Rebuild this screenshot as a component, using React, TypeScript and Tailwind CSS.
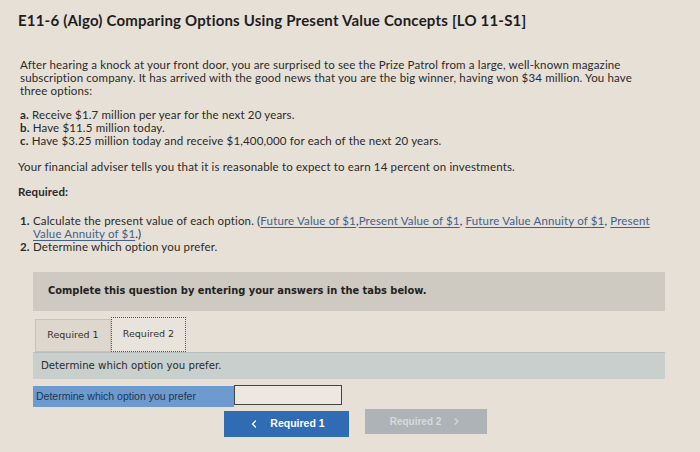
import { ChevronLeft, ChevronRight } from 'lucide-react'

const body = { fontFamily: 'Lato, "Open Sans", sans-serif' }
const verdana = { fontFamily: '"DejaVu Sans", Verdana, sans-serif' }
const arial = { fontFamily: '"Liberation Sans", Arial, sans-serif' }

function Link({ children }: { children: React.ReactNode }) {
  return <span className="text-[#43608c] underline underline-offset-2">{children}</span>
}

export default function App() {
  return (
    <div className="w-[700px] h-[452px] overflow-hidden bg-[#e6e0d7] text-[#2b2b2b] flex flex-col" style={body}>
      <h1 className="pl-[18px] pt-[10px] text-[15px] tracking-[0.2px] font-bold text-[#1e1e1e] leading-[20px]">
        E11-6 (Algo) Comparing Options Using Present Value Concepts [LO 11-S1]
      </h1>

      <div className="text-[11.5px] tracking-[0.15px] leading-[13px] flex flex-col">
        <p className="pl-[20px] pr-[50px] mt-[28px]">
          After hearing a knock at your front door, you are surprised to see the Prize Patrol from a large, well-known magazine
          subscription company. It has arrived with the good news that you are the big winner, having won $34 million. You have
          three options:
        </p>

        <ul className="pl-[20px] mt-[11px]">
          <li><b>a.</b> Receive $1.7 million per year for the next 20 years.</li>
          <li><b>b.</b> Have $11.5 million today.</li>
          <li><b>c.</b> Have $3.25 million today and receive $1,400,000 for each of the next 20 years.</li>
        </ul>

        <p className="pl-[18px] mt-[13px]">
          Your financial adviser tells you that it is reasonable to expect to earn 14 percent on investments.
        </p>

        <p className="pl-[18px] mt-[12px] font-bold">Required:</p>

        <ol className="pl-[20px] mt-[16px] pr-[30px]">
          <li className="flex">
            <b className="w-[13px] shrink-0">1.</b>
            <span>
              Calculate the present value of each option. (<Link>Future Value of $1</Link>,<Link>Present Value of $1</Link>,{' '}
              <Link>Future Value Annuity of $1</Link>, <Link>Present Value Annuity of $1</Link>.)
            </span>
          </li>
          <li className="flex">
            <b className="w-[13px] shrink-0">2.</b>
            <span>Determine which option you prefer.</span>
          </li>
        </ol>
      </div>

      <div className="mx-[33px] w-[632px] mt-[19px] h-[39px] bg-[#cfcac1] flex items-center pl-[15px]">
        <span className="text-[9.9px] font-bold text-[#222]" style={verdana}>
          Complete this question by entering your answers in the tabs below.
        </span>
      </div>

      <div className="ml-[35px] mt-[7px] flex items-end h-[34px]" style={verdana}>
        <div className="w-[76px] h-[33px] bg-[#ddd7cd] border border-[#c8c2b8] flex items-center justify-center text-[9.5px] text-[#333]">
          Required 1
        </div>
        <div className="w-[75px] h-[35px] bg-[#e9e4db] border border-dotted border-[#555] flex items-center justify-center text-[9.5px] text-[#333]">
          Required 2
        </div>
      </div>

      <div className="mx-[33px] w-[632px] h-[27px] bg-[#c8cfcd] border-t border-[#b8bcba] flex items-center pl-[8px]">
        <span className="text-[10.2px] text-[#2b2b2b]" style={verdana}>Determine which option you prefer.</span>
      </div>

      <div className="ml-[33px] mt-[7px] flex items-start">
        <div className="w-[201px] h-[21px] bg-[#6d9bcf] flex items-center pl-[3px] text-[10.5px] text-[#1f3550]" style={arial}>
          Determine which option you prefer
        </div>
        <div className="w-[108px] h-[20px] bg-[#ece8e1] border border-[#444] -mt-[1px]" />
      </div>

      <div className="flex mt-[4px] ml-[224px] gap-[16px] items-start" style={arial}>
        <div className="w-[125px] h-[26px] bg-[#2f6cb3] flex items-center justify-center gap-[10px] text-white text-[10.5px] font-bold">
          <ChevronLeft size={12} strokeWidth={2.5} />
          <span>Required 1</span>
        </div>
        <div className="w-[122px] h-[25px] -mt-[2px] bg-[#adb3b7] flex items-center justify-center gap-[10px] text-[#d6dadc] text-[10px] font-bold">
          <span>Required 2</span>
          <ChevronRight size={11} strokeWidth={2.5} />
        </div>
      </div>
    </div>
  )
}
